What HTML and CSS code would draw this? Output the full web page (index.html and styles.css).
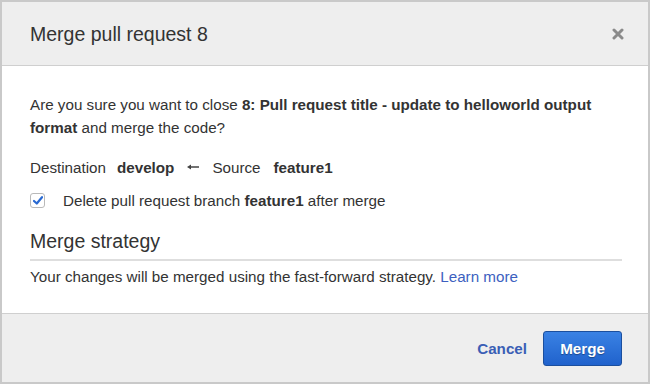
FILE: index.html
```html
<!DOCTYPE html>
<html lang="en">
<head>
    <meta charset="UTF-8">
    <meta name="viewport" content="width=device-width, initial-scale=1.0">
    <title>Merge pull request 8</title>
    <link rel="stylesheet" href="styles.css">
</head>
<body>

    <div class="modal">
        <!-- Header -->
        <div class="modal-header">
            <div class="modal-title">Merge pull request 8</div>
            <button class="close" aria-label="Close">
                <svg width="12" height="12" viewBox="0 0 12 12">
                    <path d="M2 2 L10 10 M10 2 L2 10" stroke="#8a8a8a" stroke-width="3" stroke-linecap="round"/>
                </svg>
            </button>
        </div>

        <!-- Body -->
        <div class="modal-body">
            <p class="question">Are you sure you want to close <b>8: Pull request title - update to helloworld output format</b> and merge the code?</p>

            <div class="branches">
                <span>Destination</span>
                <b>develop</b>
                <svg class="arrow" width="12" height="6" viewBox="0 0 12 6">
                    <path d="M0 3 L4 0.5 L4 2.3 L12 2.3 L12 3.7 L4 3.7 L4 5.5 Z" fill="#444"/>
                </svg>
                <span class="source">Source</span>
                <b>feature1</b>
            </div>

            <label class="check-row">
                <span class="checkbox">
                    <svg width="10" height="9" viewBox="0 0 10 9">
                        <path d="M1 5 L3.8 7.5 L9 1.2" stroke="#2a6ad2" stroke-width="2.2" fill="none" stroke-linecap="round" stroke-linejoin="round"/>
                    </svg>
                </span>
                <span>Delete pull request branch <b>feature1</b> after merge</span>
            </label>

            <h2 class="section-title">Merge strategy</h2>
            <p class="strategy">Your changes will be merged using the fast-forward strategy. <a href="#">Learn more</a></p>
        </div>

        <!-- Footer -->
        <div class="modal-footer">
            <a href="#" class="cancel">Cancel</a>
            <button class="merge">Merge</button>
        </div>
    </div>

</body>
</html>
```

FILE: styles.css
```css
body {
    margin: 0;
    font-family: "Liberation Sans", Arial, sans-serif;
    color: #333;
    background-color: #fff;
}
.modal {
    box-sizing: border-box;
    width: 650px;
    height: 384px;
    border: 2px solid #c9c9c9;
    display: flex;
    flex-direction: column;
}
.modal-header {
    height: 63px;
    background-color: #eeeeee;
    border-bottom: 1px solid #cfcfcf;
    display: flex;
    align-items: center;
    justify-content: space-between;
    padding: 0 24px 0 28px;
}
.modal-title {
    font-size: 19.5px;
    color: #333;
    padding-top: 1px;
}
.close {
    background: none;
    border: none;
    padding: 0;
    margin-top: 3px;
    cursor: pointer;
}
.modal-body {
    flex: 1;
    padding: 10px 26px 0 28px;
    font-size: 15.2px;
}
.question {
    margin: 17px 0 0;
    line-height: 23px;
}
.branches {
    display: flex;
    align-items: center;
    gap: 11px;
    margin-top: 17px;
    height: 22px;
}
.branches b,
.arrow,
.source {
    margin-right: 2px;
}
.check-row {
    display: flex;
    align-items: center;
    gap: 18px;
    margin-top: 11px;
    height: 22px;
}
.checkbox {
    box-sizing: border-box;
    width: 15px;
    height: 15px;
    border: 1px solid #b9b9b9;
    border-radius: 3px;
    background-color: #fff;
    display: flex;
    align-items: center;
    justify-content: center;
}
.section-title {
    font-size: 19.5px;
    font-weight: normal;
    margin: 19px 0 0;
    padding-bottom: 6px;
    border-bottom: 2px solid #dedede;
}
.strategy {
    margin: 6px 0 0;
    line-height: 20px;
}
.strategy a {
    color: #3d5fc0;
    text-decoration: none;
}
.modal-footer {
    height: 68px;
    background-color: #eeeeee;
    border-top: 1px solid #cfcfcf;
    display: flex;
    align-items: center;
    justify-content: flex-end;
    gap: 16px;
    padding: 0 26px 0 0;
}
.cancel {
    font-size: 15.2px;
    font-weight: bold;
    color: #3a5eb5;
    text-decoration: none;
}
.merge {
    width: 79px;
    height: 35px;
    font-family: "Liberation Sans", Arial, sans-serif;
    font-size: 15.2px;
    font-weight: bold;
    color: #fff;
    text-shadow: 0 1px 1px rgba(0, 0, 0, 0.35);
    background: linear-gradient(#3a82e4, #2062cc);
    border: 1px solid #1b4f9e;
    border-radius: 3px;
    cursor: pointer;
}
```
